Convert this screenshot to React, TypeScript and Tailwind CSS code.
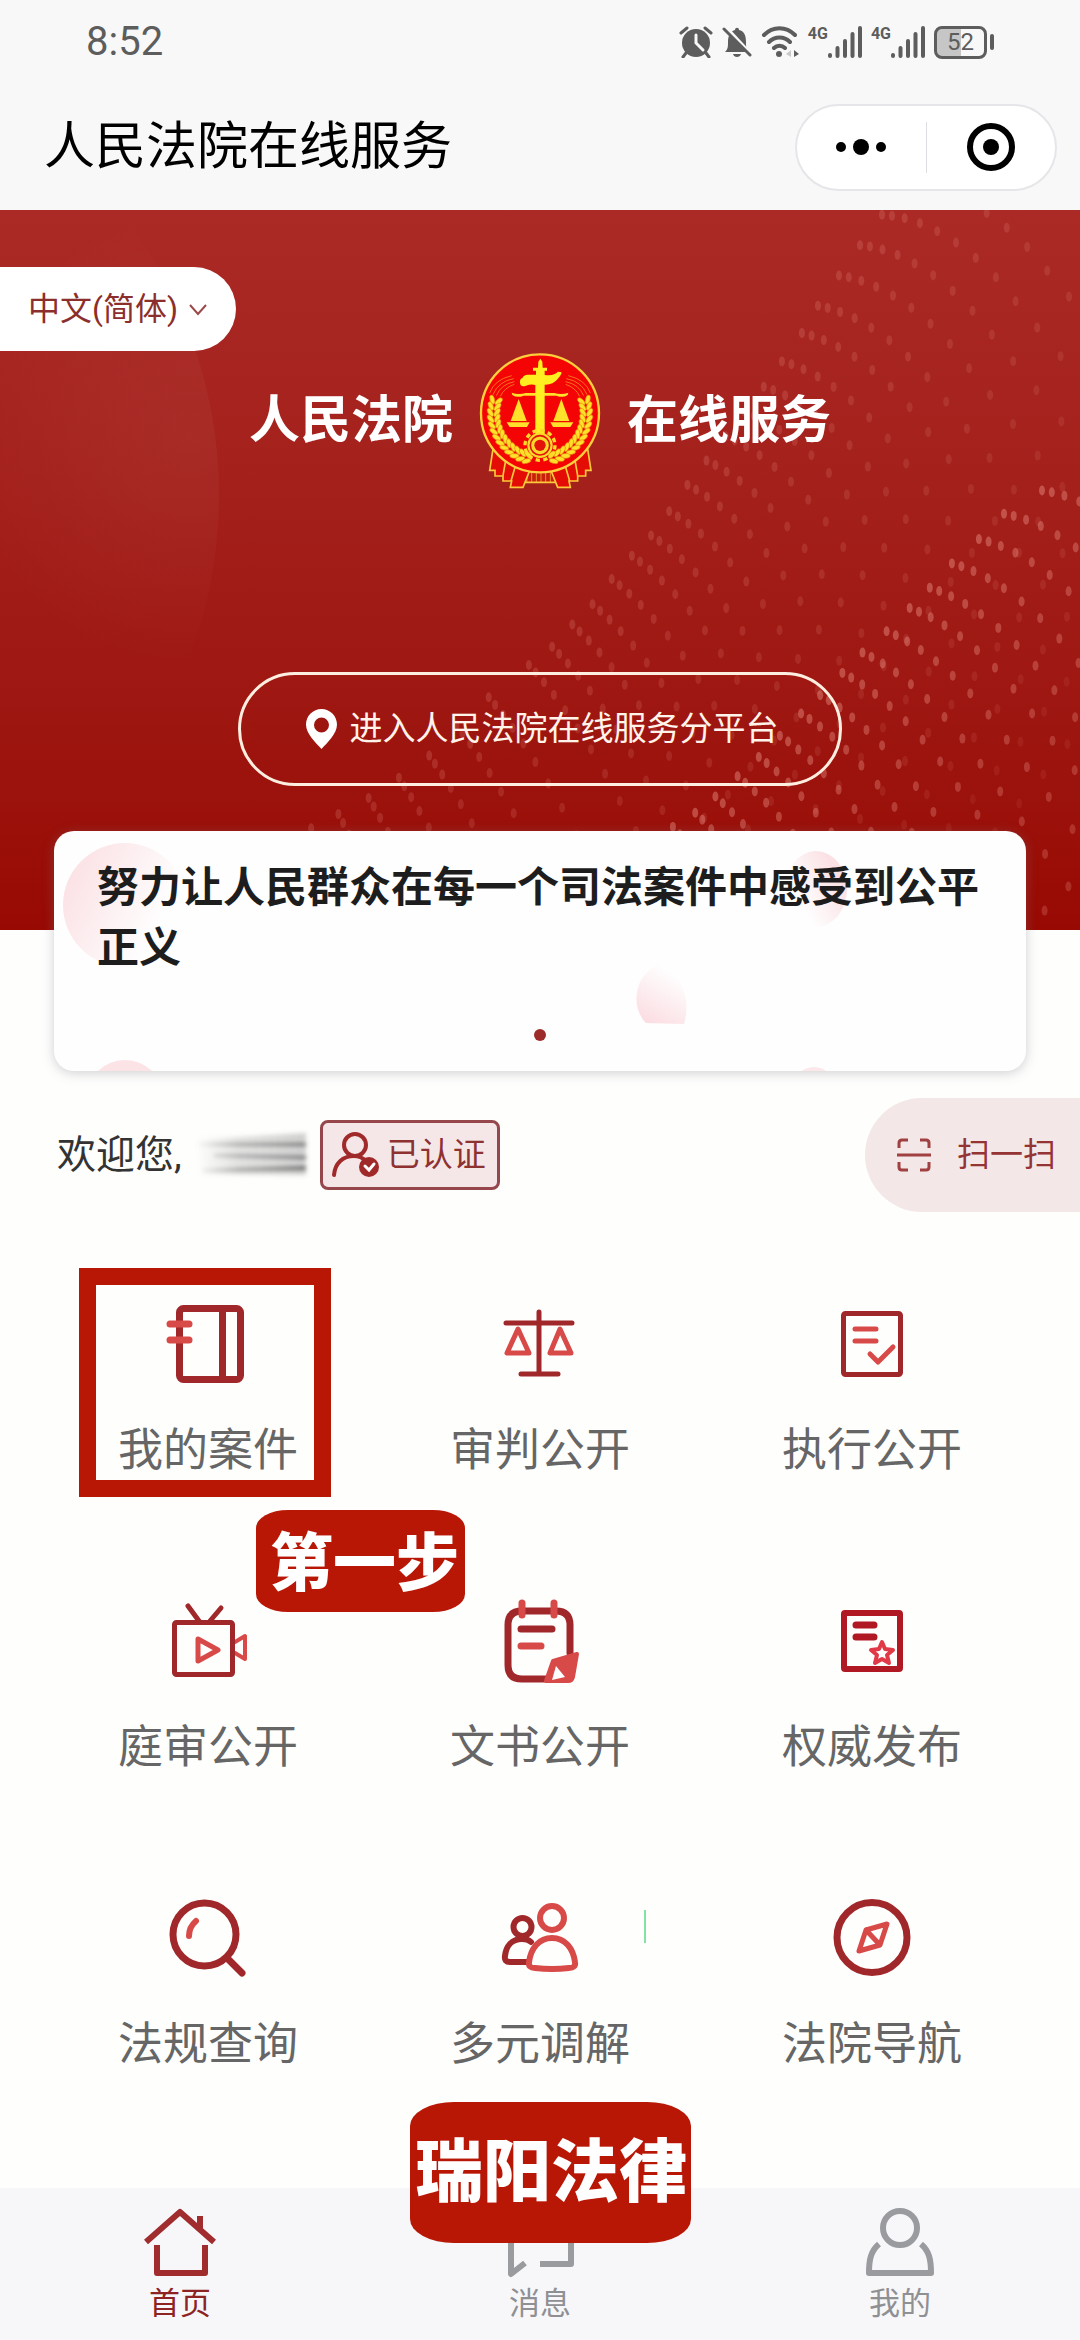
import React, { useState } from "react"
import type { ReactNode } from "react"

const DARK  = "#a0282a"
const LIGHT = "#d84a48"

interface Service {
  label: string
  icon:  ReactNode
}

/* ---------- Status bar ---------- */

function SignalBars() {
  return (
    <div className="flex items-start">
      <span className="text-base leading-4 font-bold">4G</span>
      <svg width="34" height="32" viewBox="0 0 34 32" fill="none" stroke="currentColor" strokeWidth="4" strokeLinecap="round">
        <path d="M2 29v1M9.500 22v8M17 15v15M24.500 8v22M32 2v28" />
      </svg>
    </div>
  )
}

function StatusBar() {
  return (
    <div className="flex items-center justify-between h-[64px] pt-[20px] px-[86px] text-[#5c5d5c]">
      <time className="text-[40px] leading-[40px]">8:52</time>
      <div className="flex items-center gap-[9px]">
        <svg width="34" height="32" viewBox="0 0 34 32" fill="currentColor">
          <circle cx="17" cy="17" r="14" />
          <path d="M2 7l6-5M32 7l-6-5M7 27l-3 4M27 27l3 4" stroke="currentColor" strokeWidth="3" strokeLinecap="round" />
          <path d="M17 9v8l7 7" fill="none" stroke="#f8f8f8" strokeWidth="3" strokeLinecap="round" />
        </svg>
        <svg width="30" height="32" viewBox="0 0 30 32" fill="currentColor">
          <path d="M3 26c3-3 3-5 3-10 0-7 3-11 7-12 0-3 4-3 4 0 5 1 7 5 7 12 0 5 0 7 3 10zM11 28h8c-1 4-7 4-8 0z" />
          <path d="M4 1l26 28" stroke="#f8f8f8" strokeWidth="3" />
          <path d="M2 3l26 26" stroke="currentColor" strokeWidth="3" strokeLinecap="round" />
        </svg>
        <svg width="38" height="32" viewBox="0 0 38 32" fill="none" stroke="currentColor" strokeWidth="4" strokeLinecap="round">
          <path d="M3 9c9-9 22-9 31 0M8 16c6-6 15-6 21 0M13 22c3-3 8-3 11 0" />
          <circle cx="18" cy="28" r="3" fill="currentColor" stroke="none" />
          <path d="M33 24v7l5-3z" fill="currentColor" stroke="none" />
          <path d="M30 24v7l-5-3z" fill="#c9c9c9" stroke="none" />
        </svg>
        <SignalBars />
        <SignalBars />
        <div className="flex items-center gap-[3px]">
          <div className="flex items-center justify-center w-[53px] h-[33px] rounded-lg border-3 border-current bg-linear-to-r from-[#c6c6c6] from-52% to-transparent to-52%">
            <span className="text-2xl leading-none">52</span>
          </div>
          <span className="w-1 h-4 rounded-full bg-current" />
        </div>
      </div>
    </div>
  )
}

function TitleBar() {
  return (
    <div className="flex items-center justify-between h-[146px] pt-[20px] pl-[44px] pr-[23px]">
      <h1 className="text-[51px] leading-[60px] text-black">人民法院在线服务</h1>
      <div className="flex items-center w-[262px] h-[87px] rounded-full border-2 border-[#e6e6ea] bg-white">
        <button aria-label="更多" className="flex-1 h-full flex items-center justify-center">
          <svg width="52" height="20" viewBox="0 0 52 20" fill="#000">
            <circle cx="6" cy="10" r="5" />
            <circle cx="26" cy="10" r="8" />
            <circle cx="46" cy="10" r="5" />
          </svg>
        </button>
        <span className="w-px h-[51px] bg-[#dedee2]" />
        <button aria-label="关闭" className="flex-1 h-full flex items-center justify-center">
          <svg width="50" height="50" viewBox="0 0 50 50">
            <circle cx="25" cy="25" r="21" fill="none" stroke="#000" strokeWidth="6" />
            <circle cx="25" cy="25" r="8" fill="#000" />
          </svg>
        </button>
      </div>
    </div>
  )
}

/* ---------- Hero ---------- */

interface Wave {
  starts: [number, number][]
  from:   [number, number]
  to:     [number, number]
  alpha:  number
}

const waves: Wave[] = [
  {
    starts: [[905, -22], [875, 5], [853, 35], [832, 65], [811, 95], [795, 122], [775, 150], [757, 175], [738, 200], [719, 224], [700, 248], [681, 272], [663, 298], [645, 322], [626, 342], [606, 365], [587, 390], [567, 410], [547, 432], [524, 450], [484, 482], [452, 510], [425, 540], [395, 562], [365, 582], [335, 598], [308, 612]],
    from: [-4, 50], to: [64, 66], alpha: 0.2,
  },
  {
    starts: [[1035, 280], [997, 303], [972, 328], [945, 352], [923, 376], [903, 396], [880, 419], [856, 440], [836, 460], [814, 482], [795, 500], [774, 522], [753, 543], [732, 562], [710, 582], [690, 598], [668, 612]],
    from: [4, 50], to: [45, 60], alpha: 0.4,
  },
]

function WaveDots() {
  return (
    <svg className="absolute inset-0 w-full h-full" viewBox="0 0 1080 720" preserveAspectRatio="xMaxYMin slice" aria-hidden="true">
      <defs>
        <radialGradient id="glow" gradientUnits="userSpaceOnUse" cx="190" cy="230" r="230">
          <stop offset="0" stopColor="#fff" stopOpacity="0.045" />
          <stop offset="1" stopColor="#fff" stopOpacity="0" />
        </radialGradient>
      </defs>
      <circle cx="-237" cy="285" r="456" fill="url(#glow)" />
      {waves.map((wave, w) => wave.starts.map(([sx, sy], k) => {
        const t = k / (wave.starts.length - 1)
        const a0 = wave.from[0] + (wave.to[0] - wave.from[0]) * t
        const a1 = wave.from[1] + (wave.to[1] - wave.from[1]) * t
        let x = sx
        let y = sy
        return Array.from({ length: 17 }, (_, i) => {
          const angle = ((a0 + (a1 - a0) * Math.min(1, i / 8)) * Math.PI) / 180
          const step = Math.min(40, 7 + i * 3)
          x += Math.cos(angle) * step
          y += Math.sin(angle) * step
          return (
            <ellipse key={`${w}-${k}-${i}`} cx={x.toFixed(1)} cy={y.toFixed(1)} rx="3" ry="5" fill="#f2a094" opacity={(wave.alpha * (1 - i / 28)).toFixed(2)} />
          )
        })
      }))}
    </svg>
  )
}

const kernels = Array.from({ length: 13 }, (_, i) => {
  const deg = 196 - i * 7.5
  const rad = (deg * Math.PI) / 180
  return { deg, cos: Math.cos(rad), sin: Math.sin(rad) }
})

function EmblemHalf() {
  return (
    <g>
      {kernels.map(({ deg, cos, sin }) => (
        <g key={deg}>
          <ellipse cx={239 + 129 * cos} cy={221 + 129 * sin} rx="7" ry="14" transform={`rotate(${deg + 30} ${239 + 129 * cos} ${221 + 129 * sin})`} />
          <ellipse cx={239 + 149 * cos} cy={221 + 149 * sin} rx="7" ry="14" transform={`rotate(${deg - 30} ${239 + 149 * cos} ${221 + 149 * sin})`} />
        </g>
      ))}
      <path d="M88 160q14-40 66-52M98 165q16-40 62-48M108 168q14-34 54-42M120 170q12-26 42-36" fill="none" stroke="#f7a82a" strokeWidth="2" />
      {/* balance pan */}
      <path d="M240 168h-50q-20 8-34-2l-2-7q20 7 42 1h44z" stroke="none" />
      <path d="M175 178l-24 66h48z" stroke="none" />
      <path d="M139 248h69l-8 14h-52z" stroke="none" />
    </g>
  )
}

function Emblem() {
  return (
    <svg width="122" height="136" viewBox="56 40 366 408" role="img" aria-label="法院徽章">
      <g fill="#e30d06" stroke="#fbc93a" strokeWidth="5">
        <path d="M190 392h100v36H190z" fill="#c8200c" />
        <path d="M200 396v32M214 396v32M228 396v32M242 396v32M256 396v32M270 396v32" strokeWidth="2" />
        <path d="M98 328l-10 64h16v17h24v15h26l-4 19h38l20-50z" />
        <path d="M382 328l10 64h-16v17h-24v15h-26l4 19h-38l-20-50z" />
        <path d="M136 362l-8 46M166 376l-14 48M344 362l8 46M314 376l14 48" fill="none" />
      </g>
      <circle cx="239" cy="221" r="177" fill="#f40404" stroke="#fcd03c" strokeWidth="7" />
      <g fill="#ffe02a" stroke="#e8850f" strokeWidth="2">
        <EmblemHalf />
        <g transform="translate(478 0) scale(-1 1)">
          <EmblemHalf />
        </g>
      </g>
      <g fill="#ffee20">
        <path d="M233 84l1-18 6-9 6 9 1 18h13v9h-7v13q20 2 28-2 10-4 11-8 12 0 12 4-4 10-12 18-14 18-39 17v148h-28V136q-12-4-28 2-16 6-18-8-2-12 8-16 2-8 16-9h24V93h-9v-9z" />
      </g>
      <circle cx="239" cy="317" r="45" fill="none" stroke="#ffd928" strokeWidth="10" strokeDasharray="13 10.500" />
      <circle cx="239" cy="317" r="38" fill="#f8d82a" />
      <circle cx="239" cy="317" r="29" fill="none" stroke="#e3120a" strokeWidth="5" />
      <circle cx="239" cy="317" r="17" fill="#e3120a" />
    </svg>
  )
}

function Hero() {
  const [lang, setLang] = useState("zh-CN")

  return (
    <section className="relative flex flex-col items-center pt-[57px] pb-[144px] bg-linear-to-b from-[#ab2a26] to-[#980903]">
      <WaveDots />
      <div className="relative self-start">
        <select
          aria-label="语言"
          value={lang}
          onChange={e => setLang(e.target.value)}
          className="block appearance-none w-[236px] h-[84px] pl-[28px] pr-12 rounded-r-full bg-white text-[32px] text-[#8c2f2c]"
        >
          <option value="zh-CN">中文(简体)</option>
          <option value="zh-TW">中文(繁體)</option>
        </select>
        <svg className="absolute right-7 top-9 pointer-events-none" width="20" height="14" viewBox="0 0 20 14" fill="none" stroke="#9a4a48" strokeWidth="2">
          <path d="M2 2l8 9 8-9" />
        </svg>
      </div>

      <div className="relative flex items-center gap-[26px] mt-[2px] text-[51px] leading-[60px] font-bold text-white">
        <span>人民法院</span>
        <Emblem />
        <span>在线服务</span>
      </div>

      <button className="relative flex items-center justify-center gap-[13px] w-[604px] h-[114px] mt-[183px] pl-1 rounded-full border-3 border-[#fdeee0] text-[33px] text-[#fff3ea]">
        <svg width="31" height="40" viewBox="0 0 31 40" fill="#fff" fillRule="evenodd">
          <path d="M15.500 0C7 0 0 7 0 15.500 0 25 10 34 15.500 40 21 34 31 25 31 15.500 31 7 24 0 15.500 0zM15.500 8.500a7.500 7.500 0 1 1 0 15 7.500 7.500 0 0 1 0-15z" />
        </svg>
        进入人民法院在线服务分平台
      </button>
    </section>
  )
}

/* ---------- Notice card ---------- */

function NoticeCard() {
  return (
    <section className="relative mx-[54px] -mt-[99px] px-[43px] pt-[27px] pb-[30px] rounded-[20px] bg-[#fefefe] overflow-hidden shadow-[0_2px_12px_rgba(120,120,130,0.35)]">
      <svg className="absolute left-0 top-0 w-full h-full" viewBox="0 0 972 240" preserveAspectRatio="none" aria-hidden="true">
        <defs>
          <linearGradient id="petal" x1="0" y1="0.200" x2="1" y2="0.700">
            <stop offset="0" stopColor="#fbdfe3" />
            <stop offset="0.800" stopColor="#fbdfe3" stopOpacity="0" />
          </linearGradient>
          <linearGradient id="petalRight" x1="0.800" y1="0.200" x2="0.200" y2="0.600">
            <stop offset="0" stopColor="#fbe0e4" />
            <stop offset="1" stopColor="#fbe0e4" stopOpacity="0" />
          </linearGradient>
          <linearGradient id="petalUp" x1="0.200" y1="1" x2="0.700" y2="0">
            <stop offset="0" stopColor="#fbdce1" />
            <stop offset="0.900" stopColor="#fbdce1" stopOpacity="0" />
          </linearGradient>
        </defs>
        <circle cx="71" cy="74" r="62" fill="url(#petal)" />
        <ellipse cx="762" cy="58" rx="31" ry="38" fill="url(#petalRight)" />
        <path d="M592 192c-16-16-12-48 12-58 22 8 34 32 26 59z" fill="url(#petalUp)" />
        <circle cx="71" cy="268" r="39" fill="#fce3e6" />
        <circle cx="760" cy="256" r="20" fill="#fce8ea" />
      </svg>
      <p className="relative text-[42px] leading-[60px] font-bold text-[#1d1d1d]">
        努力让人民群众在每一个司法案件中感受到公平正义
      </p>
      <span className="relative block w-3 h-3 mt-[51px] mx-auto rounded-full bg-[#9e2b2b]" />
    </section>
  )
}

/* ---------- Welcome row ---------- */

function WelcomeRow() {
  return (
    <div className="flex items-center mt-[27px] pl-[57px]">
      <p className="text-[39px] leading-[60px] text-[#333]">欢迎您,</p>
      <svg className="ml-3 mr-2 shrink-0" width="118" height="60" viewBox="0 0 118 60" aria-hidden="true">
        <defs>
          <linearGradient id="smear" x1="0" x2="1" y1="0" y2="0">
            <stop offset="0" stopColor="#888" stopOpacity="0" />
            <stop offset="0.400" stopColor="#888" stopOpacity="0.700" />
            <stop offset="1" stopColor="#555" stopOpacity="0.800" />
          </linearGradient>
          <filter id="soft"><feGaussianBlur stdDeviation="2" /></filter>
        </defs>
        <g fill="url(#smear)" filter="url(#soft)">
          <path d="M2 14l110-6v42H8z" opacity="0.350" />
          <path d="M2 18h110v3H2zM20 29l92 2v3l-92-2zM8 44l104-3v4L8 47z" />
        </g>
      </svg>
      <span className="flex items-center gap-[6px] h-[70px] pl-[8px] pr-[11px] rounded-lg border-3 border-[#96474b] bg-[#f5e7e8] text-[33px] text-[#8e3231]">
        <svg width="50" height="46" viewBox="0 0 50 46" fill="none" stroke="#a02a2a" strokeWidth="4" strokeLinecap="round">
          <circle cx="24" cy="13" r="11" />
          <path d="M3 43c1-12 9-19 20-19 6 0 9 2 12 5" />
          <circle cx="38" cy="35" r="10" fill="#a02a2a" stroke="none" />
          <path d="M34 34l4 4 5-6" stroke="#fff" strokeWidth="3" />
        </svg>
        已认证
      </span>
      <button className="flex items-center gap-[26px] h-[114px] ml-auto pl-[32px] pr-[24px] rounded-l-full bg-[#f3e7e8] text-[33px] text-[#953434]">
        <svg width="34" height="34" viewBox="0 0 34 34" fill="none" stroke="#a04040" strokeWidth="3">
          <path d="M2 10V5q0-3 3-3h6M23 2h6q3 0 3 3v5M32 24v5q0 3-3 3h-6M11 32H5q-3 0-3-3v-5M0 17h34" />
        </svg>
        扫一扫
      </button>
    </div>
  )
}

/* ---------- Service grid ---------- */

const services: Service[] = [
  {
    label: "我的案件",
    icon: (
      <>
        <rect x="11.500" y="4.500" width="61" height="71" rx="4" stroke={DARK} strokeWidth="7" />
        <path d="M54.500 5v70" stroke={DARK} strokeWidth="7" />
        <path d="M2 20h19M2 36h19" stroke={LIGHT} strokeWidth="7" />
      </>
    ),
  },
  {
    label: "审判公开",
    icon: (
      <>
        <path d="M18 25L7 49h22zM60 25L50 49h21z" stroke={LIGHT} strokeWidth="5" />
        <path d="M6 19h66M39 8v62M21 70h37" stroke={DARK} strokeWidth="5" />
      </>
    ),
  },
  {
    label: "执行公开",
    icon: (
      <>
        <rect x="11.500" y="9.500" width="57" height="61" rx="2" stroke={DARK} strokeWidth="5" />
        <path d="M23 25h21M23 37h21M38 50l8 8 15-15" stroke={LIGHT} strokeWidth="5" />
      </>
    ),
  },
  {
    label: "庭审公开",
    icon: (
      <>
        <path d="M67 41l10-6v23l-10-6" stroke={LIGHT} strokeWidth="4" />
        <rect x="6.500" y="21.500" width="58" height="52" rx="2" stroke={DARK} strokeWidth="5" />
        <path d="M20 5l11 15M53 7L42 20" stroke={DARK} strokeWidth="5" />
        <path d="M30 38v22l20-11z" stroke={LIGHT} strokeWidth="5" />
      </>
    ),
  },
  {
    label: "文书公开",
    icon: (
      <>
        <path d="M70 52V24Q70 10 56 10H22Q8 10 8 24v40q0 14 14 14h28" stroke={DARK} strokeWidth="7" />
        <path d="M22 2v12M54 2v12" stroke={LIGHT} strokeWidth="7" />
        <path d="M21 28h31" stroke={DARK} strokeWidth="7" />
        <path d="M21 45h20" stroke={LIGHT} strokeWidth="7" />
        <path d="M77 53l-24 7-7 20h22q4 0 5-4z" fill={LIGHT} stroke={LIGHT} strokeWidth="4" />
        <path d="M56 65l9 11-13 3z" fill="#fff" />
      </>
    ),
  },
  {
    label: "权威发布",
    icon: (
      <>
        <rect x="12" y="12" width="56" height="56" rx="1" stroke="#b01924" strokeWidth="6" />
        <path d="M24 24h18M24 36h18" stroke="#b01924" strokeWidth="7" />
        <path d="M50 41l3 7 8 1-6 5 2 8-7-4-7 4 2-8-6-5 8-1z" stroke="#e03a48" strokeWidth="4" />
      </>
    ),
  },
  {
    label: "法规查询",
    icon: (
      <>
        <circle cx="36.500" cy="36.500" r="31.500" stroke={DARK} strokeWidth="7" />
        <path d="M59 60l15 15" stroke={DARK} strokeWidth="7" />
        <path d="M28 23q-7 6-7 15" stroke={LIGHT} strokeWidth="6" />
      </>
    ),
  },
  {
    label: "多元调解",
    icon: (
      <>
        <circle cx="22.500" cy="29" r="9" stroke={DARK} strokeWidth="6" />
        <path d="M27 64H10q-6 0-5-6c1-10 7-17 17-17q6 0 9 3" stroke={DARK} strokeWidth="6" />
        <circle cx="52" cy="20" r="12" stroke={LIGHT} strokeWidth="6" />
        <path d="M52 40c13 0 21 10 23 24q1 6-6 6-17 2-34 0-7 0-6-6c2-14 10-24 23-24z" stroke={LIGHT} strokeWidth="6" />
      </>
    ),
  },
  {
    label: "法院导航",
    icon: (
      <>
        <circle cx="40" cy="39.500" r="35" stroke={DARK} strokeWidth="7" />
        <path d="M55 26l-21 6-7 21 21-6zM34 32l14 15" stroke={LIGHT} strokeWidth="5" />
      </>
    ),
  },
]

function ServiceGrid() {
  return (
    <div className="relative grid grid-cols-3 gap-y-[120px] mt-[92px] px-[42px]">
      {services.map((s, i) => (
        <div key={s.label} className="relative">
          <button className="flex flex-col items-center gap-[37px] w-full text-[45px] leading-[60px] text-[#666]">
            <svg className="overflow-visible" width="80" height="80" viewBox="0 0 80 80" fill="none" strokeLinecap="round" strokeLinejoin="round">
              {s.icon}
            </svg>
            {s.label}
          </button>
          {i === 0 && (
            <>
              <span className="absolute left-[37px] right-[43px] -top-9 -bottom-4 border-[17px] border-[#b91706] pointer-events-none" />
              <span className="absolute z-10 left-[214px] top-[206px] flex items-center justify-center w-[209px] h-[102px] pl-2 pt-1 rounded-[32px_/_18px] bg-[#b91706] text-[63px] leading-none font-black text-white whitespace-nowrap">
                第一步
              </span>
            </>
          )}
          {s.label === "多元调解" && <span className="absolute right-[60px] top-3 w-[2px] h-[33px] bg-[#83e3a5]" />}
        </div>
      ))}
    </div>
  )
}

/* ---------- Tab bar ---------- */

const tabs = [
  {
    label: "首页",
    color: "text-[#8e2323]",
    icon: <path d="M4 36L38 6l34 30M58 10v14M15 39v28h48V39" stroke="#a02c2e" />,
  },
  {
    label: "消息",
    color: "text-[#8f9094]",
    icon: <path d="M23 57L9 68V12h60v46H38" />,
  },
  {
    label: "我的",
    color: "text-[#8f9094]",
    icon: <path d="M38 5a17 17 0 0 1 0 34 17 17 0 0 1 0-34zM17 38C9 45 7 53 7 67h62c0-14-2-22-10-29" />,
  },
]

function TabBar() {
  return (
    <nav className="relative grid grid-cols-3 mt-[113px] pt-[18px] pb-[18px] bg-[#f7f7f9]">
      {tabs.map(t => (
        <a key={t.label} href="#" className={`flex flex-col items-center gap-1 text-[31px] leading-9 ${t.color}`}>
          <svg width="76" height="76" viewBox="0 0 76 76" fill="none" stroke="#9a9b9f" strokeWidth="6" strokeLinejoin="round">
            {t.icon}
          </svg>
          {t.label}
        </a>
      ))}
      <span className="absolute left-[38%] -top-[86px] flex items-center justify-center w-[281px] h-[141px] rounded-[44px_/_24px] bg-[#b91706] text-[68px] leading-none font-black text-white whitespace-nowrap">
        瑞阳法律
      </span>
    </nav>
  )
}

export default function App() {
  return (
    <div className="min-h-screen bg-[#fefefd] overflow-x-hidden font-[Roboto,'Noto_Sans_CJK_SC',sans-serif]">
      <header className="bg-[#f8f8f8]">
        <StatusBar />
        <TitleBar />
      </header>
      <main>
        <Hero />
        <NoticeCard />
        <WelcomeRow />
        <ServiceGrid />
      </main>
      <TabBar />
    </div>
  )
}
